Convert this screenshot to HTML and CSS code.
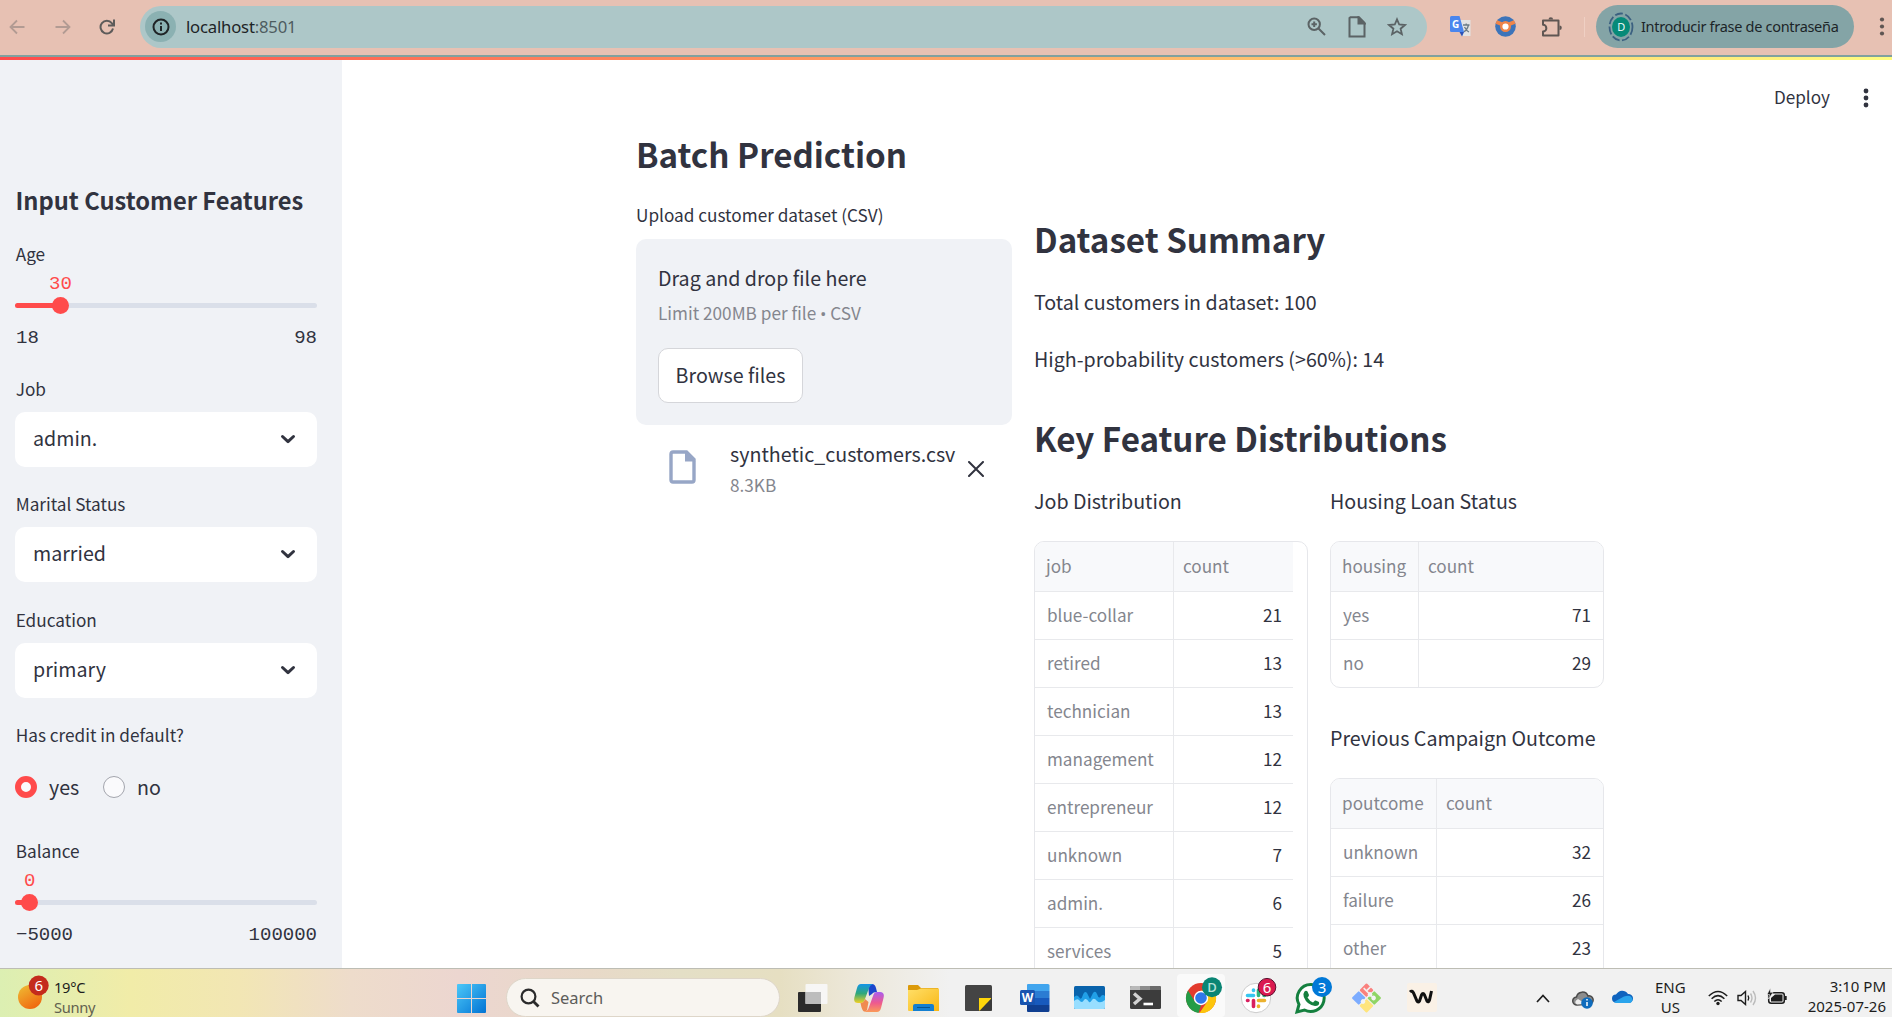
FILE: index.html
```html
<!DOCTYPE html>
<html lang="en">
<head>
<meta charset="utf-8">
<title>localhost:8501</title>
<link rel="stylesheet" href="styles.css">
</head>
<body>
<header class="browser">
  <svg class="b-back" width="16" height="16" viewBox="0 0 16 16" fill="none" stroke="#b29b93" stroke-width="1.8"><path d="M15.5 8H2M8 1.500 1.500 8 8 14.500"/></svg>
  <svg class="b-fwd" width="16" height="16" viewBox="0 0 16 16" fill="none" stroke="#b29b93" stroke-width="1.800"><path d="M.5 8H14M8 1.500 14.500 8 8 14.500"/></svg>
  <svg class="b-reload" width="16" height="16" viewBox="0 0 16 16" fill="none" stroke="#5d5b5a" stroke-width="2"><path d="M14 9.500A6.300 6.300 0 1 1 12.800 4.200L14.500 6M15 .5V6.500H9"/></svg>
  <div class="omnibox">
    <span class="info"><svg width="18" height="18" viewBox="0 0 18 18" fill="none" stroke="#1f2426" stroke-width="2"><circle cx="9" cy="9" r="7.500"/><path d="M9 8v5M9 4.600v2"/></svg></span>
    <span class="url"><b>localhost</b>:8501</span>
    <svg class="o-zoom" width="19" height="19" viewBox="0 0 19 19" fill="none" stroke="#5b6365" stroke-width="2"><circle cx="7.200" cy="7.200" r="5.700"/><path d="M11.500 11.500 18 18M7.200 4.500v5.400M4.500 7.200h5.400"/></svg>
    <svg class="o-doc" width="18" height="22" viewBox="0 0 18 22" fill="none" stroke="#5b6365" stroke-width="2"><path d="M2.500 1.200H11L16.500 7V20.500H1.500V2Z"/><path d="M10.500 1.500V7.500H16.500Z" fill="#5b6365"/></svg>
    <svg class="o-star" width="20" height="20" viewBox="0 0 20 20" fill="none" stroke="#5b6365" stroke-width="1.800"><path d="M10 2.300 12.200 7.500 17.900 8 13.600 11.700 14.900 17.200 10 14.300 5.100 17.200 6.400 11.700 2.100 8 7.800 7.500Z"/></svg>
  </div>
  <svg class="b-tr" width="21" height="21" viewBox="0 0 21 21"><path d="M8 4H20.500V20H12Z" fill="#e4e4e4"/><path d="M13 9h6.500M16.200 7.500V9M18.500 9c-1 4-3 6-5 7M14.500 11c1 2 2.500 4 4.500 5" stroke="#6b7c86" stroke-width="1.300" fill="none"/><path d="M1.500 0H9.500L14 16H1.500Q0 16 0 14.500V1.500Q0 0 1.500 0Z" fill="#4a86ee"/><path d="M9.500 16H14L12 20.500Z" fill="#2a52b8"/><text x="2" y="12" class="g-letter">G</text></svg>
  <svg class="b-ext" width="21" height="21" viewBox="0 0 21 21"><circle cx="10.500" cy="10.500" r="10.300" fill="#3c74ba"/><path d="M1.300 6 9 9M19.700 6 12 9" stroke="#ef8448" stroke-width="4"/><circle cx="10.500" cy="10.500" r="4.300" fill="#fff" stroke="#ef8448" stroke-width="2.400"/></svg>
  <svg class="b-puz" width="22" height="22" viewBox="0 0 22 22" fill="none" stroke="#5f5653" stroke-width="2"><path d="M2 4.500H17.500V19.500H2V15.500A3.300 3.300 0 0 0 2 8.800Z" stroke-linejoin="round"/><path d="M7.500 3.500a2.300 2.300 0 0 1 4.600 0zM18.500 9.500a2.300 2.300 0 0 1 0 4.600z" fill="#5f5653" stroke="none"/></svg>
  <span class="b-div"></span>
  <div class="profile">
    <svg width="26" height="30" viewBox="0 0 26 30"><ellipse cx="13" cy="15" rx="11.500" ry="13.500" fill="none" stroke="#3b6080" stroke-width="1.800" stroke-dasharray="8 2.500"/><ellipse cx="13" cy="15" rx="9" ry="10" fill="#068a78"/><text x="13" y="19" class="d-letter">D</text></svg>
    <span>Introducir frase de contraseña</span>
  </div>
  <svg class="b-dots" width="6" height="22" viewBox="0 0 6 22" fill="#5f5653"><circle cx="3" cy="3.500" r="2.100"/><circle cx="3" cy="10.500" r="2.100"/><circle cx="3" cy="17.500" r="2.100"/></svg>
</header>
<div class="decoration"></div>
<div class="app">
  <aside class="sidebar">
    <h2 class="side-title">Input Customer Features</h2>
    <div class="slider">
      <div class="label">Age</div>
      <div class="value v-age">30</div>
      <div class="track"><i style="width:15%"></i><em></em></div>
      <div class="ends"><span>18</span><span>98</span></div>
    </div>
    <div class="field first"><div class="label">Job</div><div class="select"><span>admin.</span><svg width="16" height="11" viewBox="0 0 16 11"><path d="M2.500 2.500 8 7.700 13.500 2.500"/></svg></div></div>
    <div class="field"><div class="label">Marital Status</div><div class="select"><span>married</span><svg width="16" height="11" viewBox="0 0 16 11"><path d="M2.500 2.500 8 7.700 13.500 2.500"/></svg></div></div>
    <div class="field"><div class="label">Education</div><div class="select"><span>primary</span><svg width="16" height="11" viewBox="0 0 16 11"><path d="M2.500 2.500 8 7.700 13.500 2.500"/></svg></div></div>
    <div class="field"><div class="label">Has credit in default?</div>
      <div class="radios"><span class="radio on"></span><span class="rl">yes</span><span class="radio"></span><span class="rl">no</span></div>
    </div>
    <div class="slider balance">
      <div class="label">Balance</div>
      <div class="value v-bal">0</div>
      <div class="track"><i style="width:4.760%"></i><em></em></div>
      <div class="ends"><span>−5000</span><span>100000</span></div>
    </div>
  </aside>
  <main class="main">
    <div class="toolbar"><span>Deploy</span><svg width="6" height="22" viewBox="0 0 6 22" fill="#31333f"><circle cx="3" cy="4" r="2.400"/><circle cx="3" cy="11" r="2.400"/><circle cx="3" cy="18" r="2.400"/></svg></div>
    <div class="columns">
      <section class="upload">
        <h2 class="title">Batch Prediction</h2>
        <div class="label up-label">Upload customer dataset (CSV)</div>
        <div class="drop">
          <div class="body">Drag and drop file here</div>
          <div class="small">Limit 200MB per file <span class="bullet">•</span> CSV</div>
          <button class="browse">Browse files</button>
        </div>
        <div class="file">
          <svg width="28" height="34" viewBox="0 0 28 34"><path d="M4 2H17.500L25 9.500V30Q25 32 23 32H4Q2 32 2 30V4Q2 2 4 2Z" fill="none" stroke="#97a6c6" stroke-width="3.400"/><path d="M16 1 26.500 11.500H16Z" fill="#97a6c6"/></svg>
          <div class="file-text"><div class="body">synthetic_customers.csv</div><div class="small">8.3KB</div></div>
          <svg class="close" width="16" height="16" viewBox="0 0 16 16" stroke="#31333f" stroke-width="2" stroke-linecap="round"><path d="M1 1 15 15M15 1 1 15"/></svg>
        </div>
      </section>
      <section class="summary">
        <h2 class="title">Dataset Summary</h2>
        <p class="body total">Total customers in dataset: 100</p>
        <p class="body high">High-probability customers (&gt;60%): 14</p>
        <h2 class="title key">Key Feature Distributions</h2>
        <div class="dist">
          <div>
            <p class="body sub">Job Distribution</p>
            <div class="table jobs">
              <div class="row head"><span>job</span><span>count</span></div>
              <div class="row"><span>blue-collar</span><span>21</span></div>
              <div class="row"><span>retired</span><span>13</span></div>
              <div class="row"><span>technician</span><span>13</span></div>
              <div class="row"><span>management</span><span>12</span></div>
              <div class="row"><span>entrepreneur</span><span>12</span></div>
              <div class="row"><span>unknown</span><span>7</span></div>
              <div class="row"><span>admin.</span><span>6</span></div>
              <div class="row"><span>services</span><span>5</span></div>
            </div>
          </div>
          <div>
            <p class="body sub">Housing Loan Status</p>
            <div class="table housing">
              <div class="row head"><span>housing</span><span>count</span></div>
              <div class="row"><span>yes</span><span>71</span></div>
              <div class="row"><span>no</span><span>29</span></div>
            </div>
            <p class="body sub prev">Previous Campaign Outcome</p>
            <div class="table pout">
              <div class="row head"><span>poutcome</span><span>count</span></div>
              <div class="row"><span>unknown</span><span>32</span></div>
              <div class="row"><span>failure</span><span>26</span></div>
              <div class="row"><span>other</span><span>23</span></div>
            </div>
          </div>
        </div>
      </section>
    </div>
  </main>
</div>
<footer class="taskbar">
  <div class="weather">
    <svg width="38" height="40" viewBox="0 0 38 40"><defs><linearGradient id="sun" x1="0" y1="0" x2=".6" y2="1"><stop offset="0" stop-color="#efbf35"/><stop offset="1" stop-color="#f06a10"/></linearGradient></defs><circle cx="17" cy="24" r="12" fill="url(#sun)"/><circle cx="25.700" cy="12.500" r="10" fill="#c42b1c"/><text x="25.700" y="18" class="badge-t">6</text></svg>
    <div class="w-text"><span>19°C</span><span class="dim">Sunny</span></div>
  </div>
  <svg class="start" width="29" height="29" viewBox="0 0 29 29"><defs><linearGradient id="win" x1="0" y1="0" x2="1" y2="1"><stop offset="0" stop-color="#4cc8f8"/><stop offset="1" stop-color="#0273d4"/></linearGradient></defs><path d="M1 0H14V14H0V1Q0 0 1 0ZM15 0H28Q29 0 29 1V14H15ZM0 15H14V29H1Q0 29 0 28ZM15 15H29V28Q29 29 28 29H15Z" fill="url(#win)"/></svg>
  <div class="search"><svg width="20" height="20" viewBox="0 0 20 20" fill="none" stroke="#2b2b2b" stroke-width="2.200"><circle cx="8.500" cy="8.500" r="6.900"/><path d="M13.500 13.500 18.500 18.500" stroke-width="2.800"/></svg><span>Search</span></div>
  <div class="apps">
    <span><svg width="30" height="30" viewBox="0 0 30 30"><rect x="0" y="9" width="23" height="20" rx="1" fill="#2b2b2b"/><rect x="7.500" y="1" width="22" height="20" rx="1" fill="#f7f7f7" opacity=".96"/><rect x="7.500" y="9" width="15.500" height="12" fill="#bdbdbd"/></svg></span>
    <span><svg width="30" height="28" viewBox="0 0 30 28"><defs><linearGradient id="cpa" x1="0" y1="0" x2="0" y2="1"><stop offset="0" stop-color="#1494e8"/><stop offset=".5" stop-color="#2fa87a"/><stop offset="1" stop-color="#f2d024"/></linearGradient><linearGradient id="cpb" x1="0" y1="0" x2="0" y2="1"><stop offset="0" stop-color="#a95cf0"/><stop offset=".55" stop-color="#ee5a8e"/><stop offset="1" stop-color="#fb9a58"/></linearGradient></defs><path d="M14 0H18Q21 0 22 4L23 8Q19 8 18 10L15 12Z" fill="#1b46cc"/><path d="M7 0H19Q16 1 15 4L11 15Q10 19 7 19H4Q-1 19 .5 13L3 4Q4 0 7 0Z" fill="url(#cpa)"/><path d="M6.500 19Q10 19 11 15L14.500 18 13 26Q12 28 10 27.500 8 27 6.500 19Z" fill="#f08a50"/><path d="M23 28H10Q14 27 15 23L19 12Q20 8 23 8H26Q31 8 29.500 14L27 24Q26 28 23 28Z" fill="url(#cpb)"/></svg></span>
    <span><svg width="31" height="28" viewBox="0 0 31 28"><defs><linearGradient id="fold" x1="0" y1="0" x2="1" y2="1"><stop offset="0" stop-color="#ffdf68"/><stop offset="1" stop-color="#f8b714"/></linearGradient></defs><path d="M0 2Q0 1 1 1H10L13 4H30V10H0Z" fill="#dc9a09"/><path d="M0 6H9L13 4.500H31V27H1Q0 27 0 26Z" fill="url(#fold)"/><path d="M5 27V22Q5 20 7 20H24Q26 20 26 22V27Z" fill="#147fd0"/><path d="M9 23.500H22" stroke="#075591"/></svg></span>
    <span><svg width="28" height="28" viewBox="0 0 28 28"><rect y="1" width="27" height="26" rx="1.500" fill="#444"/><path d="M14 14H26V15L15 26.500H14Z" fill="#ffd60a"/><path d="M26 15 15 26.500H27V14Z" fill="#3a3a3a"/></svg></span>
    <span><svg width="30" height="28" viewBox="0 0 30 28"><path d="M8 0H28Q29.500 0 29.500 1.500V7H7V1Q7 0 8 0Z" fill="#41a5ee"/><path d="M7 7H29.500V14H7Z" fill="#2b7cd3"/><path d="M7 14H29.500V21H7Z" fill="#185abd"/><path d="M7 21H29.500V26.500Q29.500 28 28 28H8Q7 28 7 27Z" fill="#103f91"/><rect y="6" width="15" height="15" rx="1.500" fill="#1854b0"/><text x="7.500" y="18" class="word-t">W</text></svg></span>
    <span><svg width="31" height="24" viewBox="0 0 31 24"><rect width="31" height="23" rx="1.500" fill="#0963ac"/><path d="M0 11Q3 8 5 11 7 15 8.500 10 10.500 4 13 7L16 13 19 7Q21.500 4 23 8 25 14 27 10 29 8 31 10V20H0Z" fill="#21a0e8"/><path d="M0 15Q3 12 5 14 8 18 10 14 12 11 15 16 16 17 18 14 20 11 23 15 26 18 31 14V21.500Q31 23 29.500 23H1.500Q0 23 0 21.500Z" fill="#98deff"/></svg></span>
    <span><svg width="31" height="24" viewBox="0 0 31 24"><rect width="31" height="23" rx="1.500" fill="#3c3c3c"/><path d="M0 4V1.500Q0 0 1.500 0H10V4Z" fill="#b9b9b9"/><path d="M10 0H20V4H10Z" fill="#8c8c8c"/><path d="M20 0H29.500Q31 0 31 1.500V4H20Z" fill="#6a6a6a"/><path d="M4 7.500 10 12.800 4 18" fill="none" stroke="#d2d2d2" stroke-width="3.400"/><path d="M13.500 18H23" stroke="#fff" stroke-width="2.600"/></svg></span>
    <span class="tall active"><svg width="48" height="43" viewBox="0 0 48 43"><circle cx="24" cy="24" r="15" fill="#e33b2e"/><path d="M11 16.500 17.800 27.600 24 31 21.500 39A15 15 0 0 1 11 16.500Z" fill="#249c47"/><path d="M24 16.500H37A15 15 0 0 1 22.500 39L30 28Z" fill="#fdc50c"/><circle cx="24" cy="24" r="7.200" fill="#fff"/><circle cx="24" cy="24" r="5.800" fill="#2f78ea"/><circle cx="35" cy="13.200" r="10" fill="#0a8574"/><text x="35" y="18" class="badge-d">D</text></svg></span>
    <span class="tall"><svg width="48" height="43" viewBox="0 0 48 43"><circle cx="24" cy="24" r="14.700" fill="#fff" stroke="#ccc"/><g stroke-width="3.600" stroke-linecap="round"><path d="M21.500 16v.5M15.500 21.500H21.500" stroke="#36c5f0"/><path d="M26.500 16v5.500M32 21.500h.5" stroke="#2eb67d"/><path d="M21.500 26.500v6M15.500 26.500H16" stroke="#d81f5e"/><path d="M26.500 32v.5M26.500 26.500h6" stroke="#ecb22e"/></g><circle cx="35" cy="13.200" r="8.800" fill="#da1a50" stroke="#5b1230"/><text x="35" y="18.500" class="badge-t">6</text></svg></span>
    <span class="tall"><svg width="48" height="43" viewBox="0 0 48 43"><path d="M24 10.500A13.500 13.500 0 1 1 17.500 36L10 38 12 30.500A13.500 13.500 0 0 1 24 10.500Z" fill="#fff" stroke="#15803f" stroke-width="3"/><path d="M17.500 17.500Q19 16 20.500 17.500L22 21Q22 22 20.500 23.500 22.500 27 26 28.500L28 26.500Q29 26 32 28 33 32 28 32 20 31 16.800 23 16 19 17.500 17.500Z" fill="#15803f"/><circle cx="35" cy="13" r="10" fill="#0078d7"/><text x="35" y="18.700" class="badge-t">3</text></svg></span>
    <span><svg width="31" height="30" viewBox="0 0 31 30"><g transform="translate(15.500 15) rotate(45)"><rect x="-10.500" y="-10.500" width="10" height="10" rx="1" fill="#fa817e"/><rect x=".5" y="-10.500" width="10" height="10" rx="1" fill="#8fd565"/><rect x="-10.500" y=".5" width="10" height="10" rx="1" fill="#7cacff"/><rect x=".5" y=".5" width="10" height="10" rx="1" fill="#ffe57c"/><path d="M-9-5H5M0-5V6M-5-11V-5" stroke="#f3eeee" stroke-width="1.600"/><circle cx="0" cy="-5" r="2.300" fill="#f3f3f3"/><circle cx="5" cy="-5" r="2.300" fill="#f3f3f3"/><circle cx="0" cy="5" r="2.300" fill="#f3f3f3"/></g></svg></span>
    <span><svg width="30" height="30" viewBox="0 0 30 30"><rect width="30" height="29" rx="2" fill="#faf1e6"/><path d="M3 9Q5 7 6.500 10L10 18Q11 20 12.500 18L14.500 12Q16 9 17.500 12L20 18Q21.500 20 22.500 17L24.500 8" fill="none" stroke="#111" stroke-width="3"/></svg></span>
  </div>
  <div class="tray">
    <svg class="t-up" width="14" height="9" viewBox="0 0 14 9" fill="none" stroke="#1d1d1d" stroke-width="1.700"><path d="M1 8 7 1.500 13 8"/></svg>
    <svg class="t-cloud" width="22" height="18" viewBox="0 0 22 18"><path d="M5 14A4 4 0 0 1 4.500 6 6 6 0 0 1 16 5 4 4 0 0 1 18 13Z" fill="#8d8d8d" stroke="#4b4b4b" stroke-width="1.500"/><path d="M5 13.500Q1 11 6 8L14 13Z" fill="#eee"/><circle cx="15" cy="12" r="5.800" fill="#0f6cbd"/><path d="M15 11v4M15 8v1.600" stroke="#fff" stroke-width="1.500"/></svg>
    <svg class="t-od" width="21" height="14" viewBox="0 0 21 14"><path d="M4 12.500A4 4 0 0 1 4 4.500 7 7 0 0 1 16 4 4.500 4.500 0 0 1 17 13Z" fill="#0f63be"/><path d="M2 12 12 6.500Q19 4 20.500 9 20.500 13 17 13H4.500Q2.500 13 2 12Z" fill="#2aa4ec"/></svg>
    <div class="lang"><span>ENG</span><span>US</span></div>
    <svg class="t-wifi" width="20" height="16" viewBox="0 0 20 16" fill="none" stroke="#1d1d1d" stroke-width="1.500"><path d="M.8 6Q10-3 19.200 6M3.600 8.800Q10 2.500 16.400 8.800M6.300 11.500Q10 8 13.700 11.500"/><circle cx="10" cy="13.500" r="1.700" fill="#1d1d1d" stroke="none"/></svg>
    <svg class="t-vol" width="21" height="16" viewBox="0 0 21 16" fill="none" stroke="#1d1d1d" stroke-width="1.400"><path d="M1 5.500H4L8.500 1.500V14.500L4 10.500H1Z"/><path d="M11 5.500Q12.500 8 11 10.500"/><path d="M13.500 3.500Q16.500 8 13.500 12.500M16 1Q21 8 16 15" stroke="#bbb"/></svg>
    <svg class="t-bat" width="20" height="17" viewBox="0 0 20 17"><rect x="1.700" y="4.800" width="15.600" height="10.500" rx="2.500" fill="none" stroke="#1d1d1d" stroke-width="1.500"/><path d="M4 13.500V10L8 6.500H15.500V13.500Z" fill="#1d1d1d"/><path d="M18 8h1.700v4H18z" fill="#1d1d1d"/><path d="M3.500 0 0 6.500H2.500L1.500 11 6 4.500H3.500Z" fill="#1d1d1d" stroke="#f1f1f1" stroke-width=".6"/></svg>
    <div class="clock"><span>3:10 PM</span><span>2025-07-26</span></div>
  </div>
</footer>
</body>
</html>
```
FILE: styles.css
```css
* { box-sizing: border-box; }
body {
  margin: 0; width: 1892px; height: 1017px; overflow: hidden;
  display: flex; flex-direction: column; background: #fff; color: #31333f;
  font-family: "Noto Sans CJK SC", "Noto Sans", sans-serif; font-size: 19.650px;
}
h2, p { margin: 0; }
svg { display: block; flex: none; }
span { white-space: nowrap; }

/* Browser toolbar */
.browser {
  height: 57px; flex: none; display: flex; align-items: center; padding-bottom: 2px;
  background: #e7c1b3; border-bottom: 2px solid #80a19f;
  font-family: "Noto Sans", "Open Sans", sans-serif;
}
.b-back { margin-left: 9px; }
.b-fwd { margin-left: 30px; }
.b-reload { margin-left: 28px; }
.omnibox {
  width: 1287px; height: 42px; margin-left: 25px; border-radius: 21px; background: #adc7c8;
  display: flex; align-items: center; padding-left: 5px;
}
.info { width: 31px; height: 31px; border-radius: 50%; background: #8bb1b2; display: flex; align-items: center; justify-content: center; }
.url { width: 1121px; margin-left: 10px; font-size: 16.700px; color: #4d5c60; letter-spacing: -.2px; }
.url b { font-weight: 400; color: #1d2426; }
.o-doc { margin-left: 22px; }
.o-star { margin-left: 21px; }
.b-tr { margin-left: 23px; }
.b-ext { margin-left: 24px; }
.b-puz { margin-left: 25px; }
.b-div { width: 1px; height: 20px; margin-left: 21px; background: #efd0c4; }
.profile {
  width: 258px; height: 43px; margin-left: 11px; border-radius: 22px; background: #84a4a6; color: #1c2528;
  display: flex; align-items: center; gap: 7px; padding-left: 12px; font-size: 14.500px; letter-spacing: -.3px;
}
.profile span { padding-bottom: 1px; }
.b-dots { margin-left: 25px; }
.g-letter { font: bold 10px "Open Sans", sans-serif; fill: #fff; }
.d-letter { font: 11px "Open Sans", sans-serif; fill: #fff; text-anchor: middle; }

.decoration { height: 3px; flex: none; background: linear-gradient(90deg, #ff4b4b, #fffd80); }
.app { height: 908px; flex: none; display: flex; overflow: hidden; }

/* Sidebar */
.sidebar { width: 342px; flex: none; background: #f0f2f6; padding: 120px 25px 0 15px; }
.side-title { font-size: 23.700px; line-height: 40px; font-weight: 600; white-space: nowrap; padding-left: .5px; }
.label { font-size: 17.200px; line-height: 24px; }
.sidebar .label { padding-left: .7px; }
.slider { margin-top: 22px; }
.value { margin-top: 8px; font: 19px/20px "Liberation Mono", monospace; color: #ff4b4b; }
.v-age { padding-left: 34px; }
.v-bal { padding-left: 9px; }
.track { margin-top: 9px; height: 5px; border-radius: 3px; background: #dadfe9; display: flex; align-items: center; }
.track i { height: 100%; background: #ff4b4b; border-radius: 3px 0 0 3px; }
.track em { width: 17px; height: 17px; flex: none; border-radius: 50%; background: #ff4b4b; margin-left: -8px; }
.ends { margin-top: 20px; display: flex; justify-content: space-between; font: 19px/20px "Liberation Mono", monospace; padding-left: 1px; }
.field { margin-top: 25px; }
.field.first { margin-top: 29px; }
.select { margin-top: 11px; height: 55px; border-radius: 10px; background: #fff; display: flex; align-items: center; justify-content: space-between; padding: 0 21px 0 18px; }
.select span { line-height: 32px; padding-bottom: 3px; }
.select svg { fill: none; stroke: #31333f; stroke-width: 3; stroke-linecap: round; stroke-linejoin: round; }
.field:nth-of-type(4) { margin-top: 26px; }
.radios { margin-top: 29px; height: 22px; display: flex; align-items: center; }
.radio { width: 22px; height: 22px; border-radius: 50%; border: 1.500px solid #a3a5ad; background: #fafafc; }
.radio.on { border: 6.500px solid #ff4b4b; }
.rl { margin-left: 12px; padding-bottom: 1px; }
.radio.on + .rl { width: 54px; }
.balance { margin-top: 41px; }

/* Main area */
.main { flex: 1; position: relative; padding: 71.500px 0 0 294px; }
.toolbar { position: absolute; top: 26px; right: 23px; display: flex; align-items: center; gap: 33px; font-size: 17.150px; line-height: 22px; }
.toolbar span { padding-bottom: 2px; }
.columns { display: grid; grid-template-columns: 376px 570px; column-gap: 22px; }
.title { font-size: 33.150px; line-height: 44px; font-weight: 600; white-space: nowrap; }
.body { line-height: 32px; white-space: nowrap; }
.small { font-size: 17.200px; line-height: 24px; color: #84868e; white-space: nowrap; }
.bullet { font-family: "Open Sans", sans-serif; line-height: 1; }
.up-label { margin-top: 27px; }
.drop { margin-top: 12.500px; height: 186px; border-radius: 10px; background: #f0f2f6; padding: 22.500px 22px; }
.drop .small { height: 24px; margin-top: 7px; }
.browse { display: block; margin-top: 23px; width: 145px; height: 55px; border: 1px solid #d5d6da; border-radius: 10px; background: #fff; color: inherit; font: inherit; padding: 0 0 2px; }
.file { display: flex; margin-top: 13px; padding-left: 33px; }
.file > svg { margin-top: 12px; }
.file-text { width: 226px; margin-left: 33px; }
.file-text .small { margin-top: 3px; }
.file .close { margin: 23px 0 0 12px; }
.summary { padding-top: 85px; }
.total { margin-top: 25px; }
.high { margin-top: 25px; }
.key { margin-top: 41px; }
.dist { display: grid; grid-template-columns: 274px 274px; column-gap: 22px; margin-top: 25px; }
.table { margin-top: 24.500px; border: 1px solid #e6e7eb; border-radius: 10px; overflow: hidden; font-size: 17.150px; }
.sub.prev { margin-top: 33.500px; }
.row { display: grid; grid-template-columns: 139px 1fr; height: 48.100px; line-height: 46px; border-bottom: 1px solid #e8e9ec; }
.row:last-child { border-bottom: 0; }
.row span { padding-left: 12px; color: #84868e; }
.row span:first-child { border-right: 1px solid #e8e9ec; }
.row span:last-child { text-align: right; padding-right: 12px; color: #31333f; }
.row.head { height: 49.800px; line-height: 48px; background: #f8f9fb; }
.row.head span:first-child { padding-left: 11px; }
.row.head span:last-child { text-align: left; padding-left: 9px; color: #84868e; }
.jobs { height: 500px; padding-right: 14px; }
.jobs .row span:last-child { padding-right: 11px; }
.housing { height: 147px; }
.housing .row { grid-template-columns: 88px 1fr; }
.pout { height: 260px; }
.pout .row { grid-template-columns: 106px 1fr; }

/* Taskbar */
.taskbar {
  height: 49px; flex: none; display: flex; align-items: flex-start; overflow: hidden; border-top: 1px solid #bdbdb4;
  background: linear-gradient(90deg, #dcefb2 0, #f1eca8 130px, #f2e6b4 240px, #eedccb 350px, #ecd6d0 460px, #e8d9c8 590px, #e4dfc6 680px, #e6dfc2 780px, #ece7d8 850px, #f1f1f1 950px);
  font-family: "Noto Sans", "Open Sans", sans-serif; font-size: 15px; color: #1d1d1d;
}
.weather { display: flex; width: 457px; padding-left: 13px; padding-top: 4px; }
.w-text { display: flex; flex-direction: column; margin: 4px 0 0 3px; line-height: 20px; font-size: 14.700px; letter-spacing: -.3px; }
.dim { color: #62614f; }
.badge-t { font: 15px "Noto Sans", sans-serif; fill: #fff; text-anchor: middle; }
.badge-d { font: 600 13px "Open Sans", sans-serif; fill: #b8e0d8; text-anchor: middle; }
.word-t { font: bold 12px "Open Sans", sans-serif; fill: #fff; text-anchor: middle; }
.start { margin-top: 15px; }
.search { width: 274px; height: 39px; margin: 9px 0 0 20px; border: 1px solid #ded6c9; border-radius: 20px; background: #f8f5f0; display: flex; align-items: center; gap: 11px; padding-left: 13px; font-size: 16.500px; color: #5d5c59; }
.apps { display: grid; grid-template-columns: repeat(12, 55.360px); margin-left: 5.500px; height: 49px; }
.apps > span { display: flex; justify-content: center; align-items: center; height: 43px; margin-top: 5px; padding-top: 5px; }
.apps > .tall { padding: 0; }
.apps > .active svg { background: #fafafa; border-radius: 4px; }
.tray { display: flex; flex: 1; height: 49px; }
.t-up { margin: 25px 0 0 86.500px; }
.t-cloud { margin: 22px 0 0 22px; }
.t-od { margin: 21px 0 0 18px; }
.lang { display: flex; flex-direction: column; align-items: center; width: 34px; margin: 8px 0 0 20px; line-height: 20px; }
.t-wifi { margin: 21px 0 0 21px; }
.t-vol { margin: 21px 0 0 9px; }
.t-bat { margin: 19px 0 0 9px; }
.clock { display: flex; flex-direction: column; align-items: flex-end; flex: 1; margin-top: 7px; padding-right: 6px; line-height: 20px; }
```
